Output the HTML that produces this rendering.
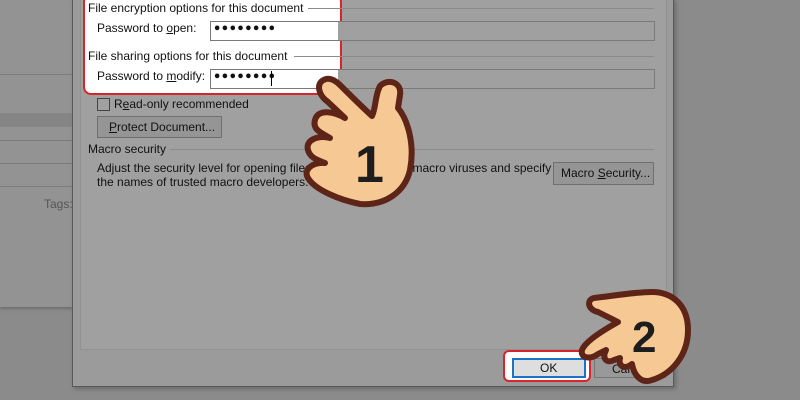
<!DOCTYPE html>
<html><head><meta charset="utf-8"><style>
body{margin:0;width:800px;height:400px;overflow:hidden;background:#8b8b8b;font-family:"Liberation Sans",sans-serif;font-size:12px;color:#111;position:relative}
.a{position:absolute}
.t{position:absolute;white-space:nowrap;font-size:12px}
.dots{position:absolute;font-size:13px;font-weight:bold;letter-spacing:-0.5px;font-family:"DejaVu Sans",sans-serif}
</style></head><body>
<div class="a" style="left:0;top:0;width:73px;height:307px;background:#939393;box-shadow:0 2px 3px #6d6d6d"></div>
<div class="a" style="left:0;top:74px;width:73px;height:1px;background:#7c7c7c"></div>
<div class="a" style="left:0;top:113px;width:73px;height:14px;background:#858585"></div>
<div class="a" style="left:0;top:140px;width:73px;height:1px;background:#7c7c7c"></div>
<div class="a" style="left:0;top:163px;width:73px;height:1px;background:#7c7c7c"></div>
<div class="a" style="left:0;top:186px;width:73px;height:1px;background:#7c7c7c"></div>
<div class="t" style="left:44px;top:197px;color:#555">Tags:</div>
<div class="a" style="left:72px;top:-2px;width:600px;height:387px;background:#9b9b9b;border:1px solid #5a5a5a;box-shadow:2px 2px 4px #6a6a6a"></div>
<div class="a" style="left:80px;top:-2px;width:585px;height:350px;background:#a0a0a0;border:1px solid #929292"></div>
<div class="a" style="left:83px;top:-6px;width:255px;height:97px;background:#fff;border:2px solid #d8252c;border-radius:8px"></div>
<div class="a" style="left:308px;top:8px;width:346px;height:1px;background:#8a8a8a"></div>
<div class="t" style="left:88px;top:1px;background:#fff;padding-right:4px">File encryption options for this document</div>
<div class="t" style="left:97px;top:21px">Password to <u>o</u>pen:</div>
<div class="a" style="left:210px;top:21px;width:443px;height:18px;background:#a0a0a0;border:1px solid #7a7a7a"></div>
<div class="a" style="left:211px;top:22px;width:127px;height:18px;background:#fff"></div>
<div class="dots" style="left:213px;top:22px">••••••••</div>
<div class="a" style="left:294px;top:56px;width:360px;height:1px;background:#8a8a8a"></div>
<div class="t" style="left:88px;top:49px;background:#fff;padding-right:4px">File sharing options for this document</div>
<div class="t" style="left:97px;top:69px">Password to <u>m</u>odify:</div>
<div class="a" style="left:210px;top:69px;width:443px;height:18px;background:#a0a0a0;border:1px solid #7a7a7a"></div>
<div class="a" style="left:211px;top:70px;width:127px;height:18px;background:#fff"></div>
<div class="dots" style="left:213px;top:70px">••••••••</div>
<div class="a" style="left:271px;top:71px;width:1px;height:15px;background:#000"></div>
<div class="a" style="left:97px;top:98px;width:11px;height:11px;border:1px solid #444"></div>
<div class="t" style="left:114px;top:97px">R<u>e</u>ad-only recommended</div>
<div class="a" style="left:97px;top:116px;width:123px;height:20px;background:#959595;border:1px solid #6f6f6f"></div>
<div class="t" style="left:109px;top:120px"><u>P</u>rotect Document...</div>
<div class="a" style="left:168px;top:149px;width:486px;height:1px;background:#8a8a8a"></div>
<div class="t" style="left:88px;top:142px;background:#a0a0a0;padding-right:4px">Macro security</div>
<div class="t" style="left:97px;top:161px">Adjust the security level for opening files that might contain macro viruses and specify</div>
<div class="t" style="left:97px;top:175px">the names of trusted macro developers.</div>
<div class="a" style="left:553px;top:162px;width:99px;height:21px;background:#959595;border:1px solid #6f6f6f"></div>
<div class="t" style="left:561px;top:166px">Macro <u>S</u>ecurity...</div>
<div class="a" style="left:503px;top:350px;width:84px;height:28px;background:#fff;border:2px solid #d8252c;border-radius:6px"></div>
<div class="a" style="left:512px;top:358px;width:70px;height:16px;background:#dedede;border:2px solid #1b73c8"></div>
<div class="t" style="left:540px;top:361px">OK</div>
<div class="a" style="left:594px;top:358px;width:70px;height:18px;background:#999;border:1px solid #777"></div>
<div class="t" style="left:612px;top:362px">Cancel</div>
<svg class="a" style="left:0;top:0" width="800" height="400" viewBox="0 0 800 400">
<g fill="#f6c994" stroke="#5e2418" stroke-width="6" stroke-linejoin="round">
<path d="M326,79 C315,82 318,95 328,102 L345,118 C335,112 318,108 315,120 C312,130 322,133 330,138 C318,135 305,140 308,150 C310,158 318,160 325,163 C312,162 303,170 308,178 C315,190 340,200 360,204 C385,206 405,192 410,170 C415,145 408,120 398,108 L400,95 C402,82 388,78 380,86 C375,95 376,108 372,116 C360,105 345,90 340,85 C335,80 330,78 326,79 Z"/>
<path d="M594,298 C586,300 588,310 598,312 L618,322 C600,332 585,342 582,350 C580,358 590,360 598,354 L606,350 C602,358 606,364 614,360 L620,358 C618,366 624,370 632,364 C634,376 642,384 652,380 C672,374 688,355 688,330 C688,305 672,292 652,292 C635,292 612,296 594,298 Z"/>
</g>
<text x="355" y="182" font-family="Liberation Sans" font-weight="bold" font-size="52" fill="#1d1d1d">1</text>
<text x="632" y="352" font-family="Liberation Sans" font-weight="bold" font-size="44" fill="#1d1d1d">2</text>
</svg>
</body></html>
